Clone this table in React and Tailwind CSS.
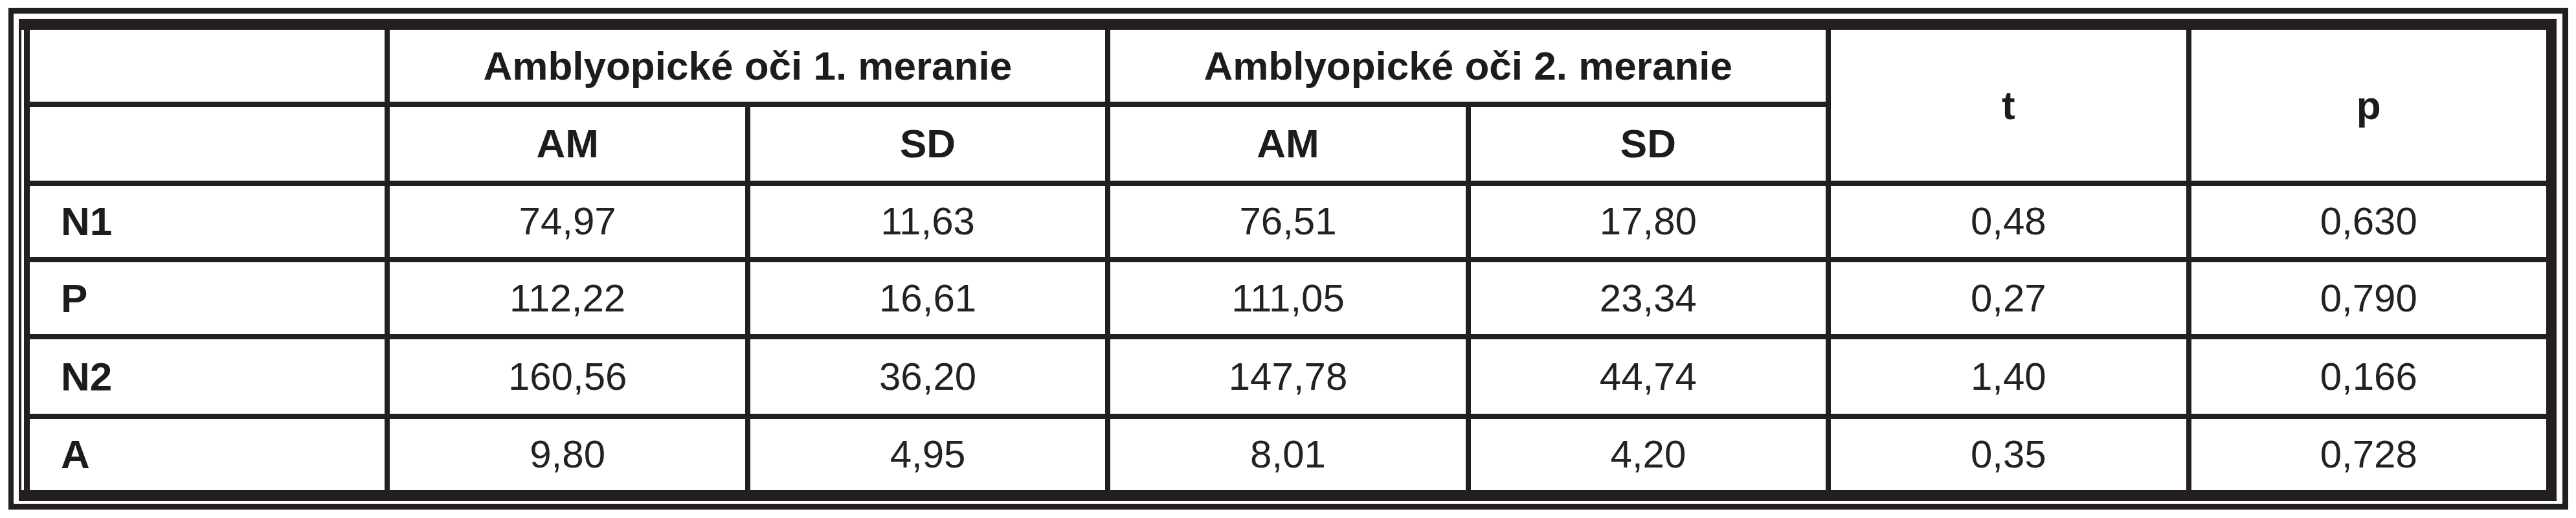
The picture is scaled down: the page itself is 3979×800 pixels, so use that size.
import React from "react";

const rows = [
  { label: "N1", values: ["74,97", "11,63", "76,51", "17,80", "0,48", "0,630"] },
  { label: "P", values: ["112,22", "16,61", "111,05", "23,34", "0,27", "0,790"] },
  { label: "N2", values: ["160,56", "36,20", "147,78", "44,74", "1,40", "0,166"] },
  { label: "A", values: ["9,80", "4,95", "8,01", "4,20", "0,35", "0,728"] },
];

const cell = "bg-white flex items-center justify-center";
const head = "text-[62px] font-bold leading-none";

const App = () => {
  return (
    <div className="w-[3979px] h-[800px] bg-white pl-[13px] pt-[12px] font-['Liberation_Sans',Arial,sans-serif] text-[#1c1c1c]">
      <div className="w-[3954px] h-[775px] border-[#231f20] border-t-[9px] border-l-[8px] border-r-[9px] border-b-[9px] pt-[8px] pl-[8px] pr-[9px] pb-[4px]">
        <div className="flex h-full bg-[#231f20] py-[17px] pl-[4px] pr-[16px]">
          <div className="w-[4px] bg-white" />
          <div className="ml-[9px] grid flex-1 grid-cols-7 grid-rows-[111px_114px_110px_111px_115px_110px] gap-[8px]">
            {/* header row 1 */}
            <div className={cell} />
            <div className={`${cell} col-span-2 ${head}`}>Amblyopické oči 1. meranie</div>
            <div className={`${cell} col-span-2 ${head}`}>Amblyopické oči 2. meranie</div>
            <div className={`${cell} row-span-2 ${head}`}>t</div>
            <div className={`${cell} row-span-2 ${head}`}>p</div>

            {/* header row 2 */}
            <div className={cell} />
            <div className={`${cell} ${head}`}>AM</div>
            <div className={`${cell} ${head}`}>SD</div>
            <div className={`${cell} ${head}`}>AM</div>
            <div className={`${cell} ${head}`}>SD</div>

            {rows.map((row) => (
              <React.Fragment key={row.label}>
                <div className={`bg-white flex items-center pl-[48px] ${head}`}>{row.label}</div>
                {row.values.map((v, i) => (
                  <div key={i} className={`${cell} text-[60px] leading-none text-[#222]`}>
                    {v}
                  </div>
                ))}
              </React.Fragment>
            ))}
          </div>
        </div>
      </div>
    </div>
  );
};

export default App;
